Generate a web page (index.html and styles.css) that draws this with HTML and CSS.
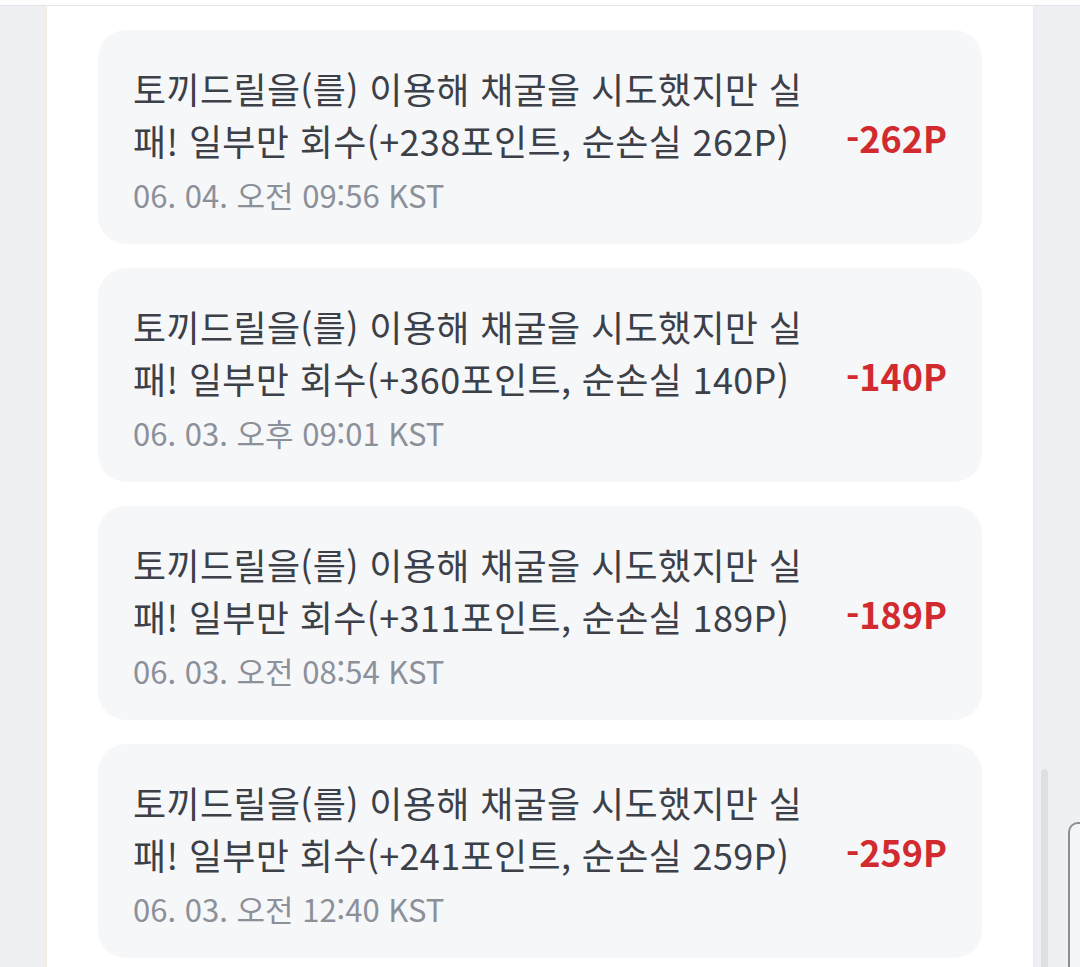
FILE: index.html
```html
<!DOCTYPE html>
<html lang="ko">
<head>
    <meta charset="UTF-8">
    <meta name="viewport" content="width=device-width, initial-scale=1.0">
    <title>포인트 내역</title>
    <link rel="stylesheet" href="styles.css">
</head>
<body>
    <div class="topbar"></div>
    <div class="panel">
        <ul class="history">
            <li class="entry">
                <div class="entry-text">
                    <p class="desc">토끼드릴을(를) 이용해 채굴을 시도했지만 실패! 일부만 회수(+238포인트, 순손실 262P)</p>
                    <p class="date">06. 04. 오전 09:56 KST</p>
                </div>
                <div class="amount">-262P</div>
            </li>
            <li class="entry">
                <div class="entry-text">
                    <p class="desc">토끼드릴을(를) 이용해 채굴을 시도했지만 실패! 일부만 회수(+360포인트, 순손실 140P)</p>
                    <p class="date">06. 03. 오후 09:01 KST</p>
                </div>
                <div class="amount">-140P</div>
            </li>
            <li class="entry">
                <div class="entry-text">
                    <p class="desc">토끼드릴을(를) 이용해 채굴을 시도했지만 실패! 일부만 회수(+311포인트, 순손실 189P)</p>
                    <p class="date">06. 03. 오전 08:54 KST</p>
                </div>
                <div class="amount">-189P</div>
            </li>
            <li class="entry">
                <div class="entry-text">
                    <p class="desc">토끼드릴을(를) 이용해 채굴을 시도했지만 실패! 일부만 회수(+241포인트, 순손실 259P)</p>
                    <p class="date">06. 03. 오전 12:40 KST</p>
                </div>
                <div class="amount">-259P</div>
            </li>
        </ul>
    </div>

    <!-- 스크롤바, 우측 하단 떠있는 박스 -->
    <div class="scroll-thumb"></div>
    <div class="float-box"></div>
</body>
</html>
```

FILE: styles.css
```css
body {
    margin: 0;
    height: 967px;
    overflow: hidden;
    font-family: "Noto Sans CJK KR", "Noto Sans", sans-serif;
    background-color: #eff0f3;
}
.topbar {
    height: 5px;
    background-color: #fff;
    border-bottom: 1px solid #e3e5e9;
}
.panel {
    margin: 0 46px;
    padding: 24px 51px 30px;
    background-color: #fff;
    border-left: 1px solid #f4ecda;
    border-right: 1px solid #f4ecda;
    min-height: 967px;
}
.history {
    list-style: none;
    margin: 0;
    padding: 0;
    display: flex;
    flex-direction: column;
    gap: 24px;
}
.entry {
    display: flex;
    align-items: center;
    gap: 38px;
    background-color: #f6f7f9;
    border-radius: 28px;
    padding: 32px 35px 29px;
}
.entry-text {
    flex: 1;
}
.desc {
    margin: 0;
    font-size: 36px;
    line-height: 52px;
    letter-spacing: 0.35px;
    color: #3c4048;
}
.date {
    margin: 9px 0 0;
    font-size: 31px;
    line-height: 40px;
    color: #8b9099;
}
.amount {
    margin-bottom: 4px;
    font-size: 36px;
    font-weight: 700;
    color: #d22b2f;
    white-space: nowrap;
}
.scroll-thumb {
    position: absolute;
    left: 1041px;
    top: 769px;
    width: 7px;
    height: 220px;
    border-radius: 4px;
    background-color: #dedfe3;
}
.float-box {
    position: absolute;
    left: 1068px;
    top: 822px;
    width: 40px;
    height: 200px;
    border: 2px solid #8e8f92;
    border-radius: 10px;
    background-color: #f4f5f7;
}
```
